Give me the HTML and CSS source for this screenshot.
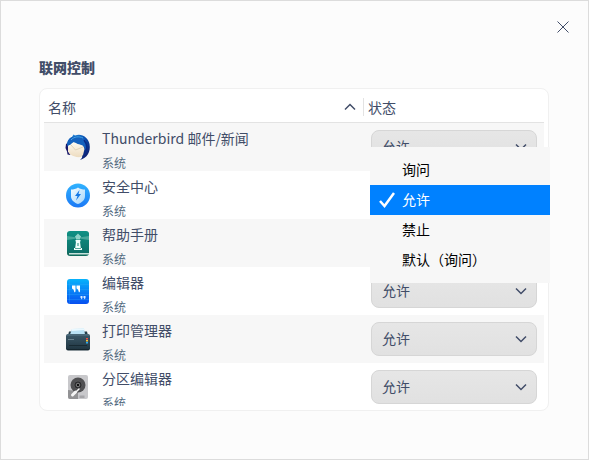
FILE: index.html
```html
<!DOCTYPE html>
<html lang="zh-CN">
<head>
<meta charset="utf-8">
<meta name="viewport" content="width=device-width, initial-scale=1">
<title>联网控制</title>
<link rel="stylesheet" href="styles.css">
</head>
<body>
<main class="window">
  <header class="titlebar">
    <button class="close" type="button" aria-label="关闭">
      <svg width="12" height="12" viewBox="0 0 12 12"><path d="M.5.5l11 11M11.5.5l-11 11"/></svg>
    </button>
  </header>
  <h1 class="title">联网控制</h1>
  <section class="panel">
    <div class="list">
      <table class="apps">
        <colgroup><col><col class="col-status"></colgroup>
        <thead>
          <tr>
            <th scope="col" aria-sort="ascending"><div class="head">名称
              <svg class="chevron" width="12" height="8" viewBox="0 0 12 8"><path d="M1 6.500l5-5 5 5"/></svg></div></th>
            <th scope="col"><div class="head head-status">状态</div></th>
          </tr>
        </thead>
        <tbody>
          <tr>
            <td><div class="app">
              <svg class="icon" viewBox="0 0 28 28">
                <defs>
                  <linearGradient id="tb" x1="0" y1="0" x2="1" y2="1"><stop offset="0" stop-color="#2b9be8"/><stop offset=".45" stop-color="#0b50b0"/><stop offset="1" stop-color="#10105a"/></linearGradient>
                  <linearGradient id="env" x1="0" y1="0" x2="0" y2="1"><stop offset="0" stop-color="#fffaf0"/><stop offset="1" stop-color="#eddcc0"/></linearGradient>
                </defs>
                <path fill="#18186a" d="M2 11l-.5 4 1.500 3.500.5 3L6 22l3-8-4-5z"/>
                <path fill="url(#tb)" d="M8 4l1.500-2.500 1.500 1c7-2.500 13 2 14.500 8.500 1.500 8-2.500 14-9.500 16 2-1.500 2.500-3 2-5L4 14C2.500 11 4 7 6 5.500z"/>
                <path fill="url(#env)" d="M4 13l5-4 5 1.500 5 1.500 1.500 4-1.500 6-2 2c-4 .5-8-.5-11.500-3L4 18.500z"/>
                <path fill="none" stroke="#dccbb0" stroke-width=".8" d="M7 12l4.500 5 7.500-3"/>
                <path fill="#1561bd" d="M3 12c0-4 2-7 5-8 5-2 11-1 13 2l2 7-2 4c0-3-2-5-5-5.500-3-.5-5-2-5-3-2 .5-4 2-5 3.500z"/>
                <path fill="none" stroke="#43a6e8" d="M7 7c3-3.500 8-4 12-2"/>
                <path fill="none" stroke="#0a2b86" stroke-width="1.500" d="M20 7c3 4 3.500 9 1 14"/>
              </svg>
              <div class="text"><span class="name">Thunderbird 邮件/新闻</span><span class="kind">系统</span></div></div></td>
            <td><div class="pick"><select aria-label="Thunderbird 邮件/新闻"><option>询问</option><option selected>允许</option><option>禁止</option><option>默认（询问）</option></select><svg class="chevron" width="12" height="8" viewBox="0 0 12 8"><path d="M1 1.500l5 5 5-5"/></svg></div></td>
          </tr>
          <tr>
            <td><div class="app">
              <svg class="icon" viewBox="0 0 28 28">
                <defs>
                  <linearGradient id="safe" x1="0" y1="0" x2="0" y2="1"><stop offset="0" stop-color="#30b3ff"/><stop offset="1" stop-color="#1b78f5"/></linearGradient>
                  <linearGradient id="shield" x1="0" y1="0" x2="1" y2="1"><stop offset="0" stop-color="#f4fbff"/><stop offset="1" stop-color="#a5d6fb"/></linearGradient>
                </defs>
                <circle cx="14" cy="14.500" r="12" fill="url(#safe)"/>
                <path fill="url(#shield)" d="M14 6.500c2 1.500 4.500 2 7 2V15c0 4-3 6.500-7 8-4-1.500-7-4-7-8V8.500c2.500 0 5-.5 7-2z"/>
                <path fill="#1478e6" d="M15.500 9L11 15h2.500l-1.500 4.500 5-6.500h-2.500z"/>
              </svg>
              <div class="text"><span class="name">安全中心</span><span class="kind">系统</span></div></div></td>
            <td><div class="pick"><select aria-label="安全中心"><option>询问</option><option selected>允许</option><option>禁止</option><option>默认（询问）</option></select><svg class="chevron" width="12" height="8" viewBox="0 0 12 8"><path d="M1 1.500l5 5 5-5"/></svg></div></td>
          </tr>
          <tr>
            <td><div class="app">
              <svg class="icon" viewBox="0 0 28 28">
                <defs><linearGradient id="help" x1="0" y1="0" x2="0" y2="1"><stop offset="0" stop-color="#0f9184"/><stop offset="1" stop-color="#0d6f68"/></linearGradient></defs>
                <rect x="3" y="3" width="22" height="24" rx="3" fill="#116b5c"/>
                <path fill="#c5e0da" d="M5 24h20v1.500H5z"/>
                <rect x="3" y="2" width="22" height="22" rx="3" fill="url(#help)"/>
                <path fill="#6bbcae" opacity=".6" d="M13 8.500L3 7v4l10-1.500zM15 8.500L25 7v4l-10-1.500z"/>
                <path fill="#8fd3c8" d="M14 4.500l3 3v1h-1v2h-4v-2h-1v-1z"/>
                <path fill="#f2fffb" d="M11.500 11h5v1.500h-.5l.8 6.500H18v2h-8v-2h1.200l.8-6.500h-.5z"/>
                <path fill="#258c7c" d="M13.500 14h1v3h-1zM11 19h6v.700h-6z"/>
              </svg>
              <div class="text"><span class="name">帮助手册</span><span class="kind">系统</span></div></div></td>
            <td><div class="pick"><select aria-label="帮助手册"><option>询问</option><option selected>允许</option><option>禁止</option><option>默认（询问）</option></select><svg class="chevron" width="12" height="8" viewBox="0 0 12 8"><path d="M1 1.500l5 5 5-5"/></svg></div></td>
          </tr>
          <tr>
            <td><div class="app">
              <svg class="icon" viewBox="0 0 28 28">
                <defs><linearGradient id="edit" x1="0" y1="0" x2="0" y2="1"><stop offset="0" stop-color="#08b3fb"/><stop offset="1" stop-color="#074ff0"/></linearGradient></defs>
                <rect x="3" y="2" width="22" height="25" rx="3" fill="url(#edit)"/>
                <path fill="none" stroke="#39adfa" stroke-width=".5" opacity=".6" d="M5.500 2v25M3 7.500h22M3 12.500h22M3 17.500h22M3 22.500h22"/>
                <path fill="#fff" d="M8 8.500h3.500v6l-1 1-1-3L8 11.500zM12.500 8.500H16v6l-1 1-1-3-1.500-1z"/>
                <path fill="#d7ecff" d="M16.500 19h2v2l-1 1.500-.5-1.500h-.5zM19.500 19h2v2l-1 1.500-.5-1.500h-.5z"/>
              </svg>
              <div class="text"><span class="name">编辑器</span><span class="kind">系统</span></div></div></td>
            <td><div class="pick"><select aria-label="编辑器"><option>询问</option><option selected>允许</option><option>禁止</option><option>默认（询问）</option></select><svg class="chevron" width="12" height="8" viewBox="0 0 12 8"><path d="M1 1.500l5 5 5-5"/></svg></div></td>
          </tr>
          <tr>
            <td><div class="app">
              <svg class="icon" viewBox="0 0 28 28">
                <defs><linearGradient id="prn" x1="0" y1="0" x2="0" y2="1"><stop offset="0" stop-color="#3c596a"/><stop offset="1" stop-color="#1e333e"/></linearGradient></defs>
                <path fill="#243d49" d="M5 6.500h18l1 4H4z"/>
                <path fill="#b9e2f5" d="M8 4l12-.5 1 6H6z"/>
                <path fill="#e9f8ff" d="M8 4l12-.5v1.500L8 6z"/>
                <rect x="2" y="9" width="24" height="16.500" rx="2" fill="url(#prn)"/>
                <path fill="#577786" d="M3 9.500h22v1H3z"/>
                <path fill="#78909b" d="M4 14h6v.800H4z"/>
                <path fill="#15252d" d="M5 20h18v.700H5zM3 24h22v1H3z"/>
                <path fill="#ee4f3e" d="M22 13h2v1.500h-2z"/><path fill="#f4c23c" d="M22 15h2v1.500h-2z"/><path fill="#27a9ee" d="M22 17h2v1.500h-2z"/>
              </svg>
              <div class="text"><span class="name">打印管理器</span><span class="kind">系统</span></div></div></td>
            <td><div class="pick"><select aria-label="打印管理器"><option>询问</option><option selected>允许</option><option>禁止</option><option>默认（询问）</option></select><svg class="chevron" width="12" height="8" viewBox="0 0 12 8"><path d="M1 1.500l5 5 5-5"/></svg></div></td>
          </tr>
          <tr>
            <td><div class="app">
              <svg class="icon" viewBox="0 0 28 28">
                <rect x="4" y="2" width="20" height="24" rx="2" fill="#c8c8cb"/>
                <path fill="#929294" d="M4 17l10 1v8H6q-2 0-2-2z"/>
                <circle cx="14" cy="12" r="7.500" fill="#505052"/>
                <circle cx="14" cy="12" r="4" fill="#29292b" stroke="#6a6a6c" stroke-width=".6"/>
                <circle cx="14" cy="12" r="1.800" fill="#111" stroke="#999" stroke-width=".8"/>
                <path fill="none" stroke="#f5f5f5" stroke-width="3" stroke-linecap="round" d="M8.500 22l3-3"/>
                <path fill="none" stroke="#f5f5f5" stroke-width="1.500" stroke-linecap="round" d="M11 20l4-4"/>
                <path fill="#a5a5a8" d="M15.500 22.500h5v2.500h-5z"/>
              </svg>
              <div class="text"><span class="name">分区编辑器</span><span class="kind">系统</span></div></div></td>
            <td><div class="pick"><select aria-label="分区编辑器"><option>询问</option><option selected>允许</option><option>禁止</option><option>默认（询问）</option></select><svg class="chevron" width="12" height="8" viewBox="0 0 12 8"><path d="M1 1.500l5 5 5-5"/></svg></div></td>
          </tr>
        </tbody>
      </table>
    </div>
    <div class="menu" role="menu">
      <button type="button" role="menuitemradio" aria-checked="false">询问</button>
      <button type="button" role="menuitemradio" aria-checked="true"><svg width="16" height="18" viewBox="0 0 16 18"><path d="M1 11l4.500 5L15 3"/></svg>允许</button>
      <button type="button" role="menuitemradio" aria-checked="false">禁止</button>
      <button type="button" role="menuitemradio" aria-checked="false">默认（询问）</button>
    </div>
  </section>
</main>
</body>
</html>
```
FILE: styles.css
```css
* {
  box-sizing: border-box;
}

body {
  margin: 0;
  font: 14px/20px "Noto Sans CJK SC", sans-serif;
  color: #414d68;
}

button,
select {
  margin: 0;
  border: 0;
  font: inherit;
  color: inherit;
}

.window {
  display: flex;
  flex-direction: column;
  height: 100vh;
  padding: 0 39px 48px 38px;
  border: 1px solid #dcdcdc;
  background: #fcfcfc;
}

.titlebar {
  display: flex;
  flex: none;
  justify-content: flex-end;
  height: 52px;
  margin-right: -39px;
}

.close {
  display: grid;
  place-items: center;
  width: 50px;
  padding: 0;
  background: none;
}

.close svg {
  fill: none;
  stroke: #414d68;
}

.title {
  margin: 4px 0 11px;
  font-size: 14px;
  line-height: 20px;
  font-weight: 900;
}

.panel {
  position: relative;
  display: flex;
  flex: 1;
  min-height: 0;
  padding: 4px;
  border: 1px solid #f0f0f0;
  border-radius: 8px;
  background: #fff;
}

.list {
  flex: 1;
  overflow: hidden;
}

.apps {
  width: 100%;
  table-layout: fixed;
  border-collapse: collapse;
}

.col-status {
  width: 181px;
}

.apps th,
.apps td {
  padding: 0;
}

.apps th {
  border-bottom: 1px solid #e3e3e3;
  font-weight: 400;
  text-align: left;
}

.head {
  display: flex;
  align-items: center;
  justify-content: space-between;
  height: 29px;
  padding: 0 7px 2px 4px;
}

.head-status::before {
  content: "";
  width: 1px;
  height: 18px;
  margin-right: 4px;
  background: #e3e3e3;
}

.head-status {
  justify-content: flex-start;
  padding-left: 0;
}

.chevron {
  fill: none;
  stroke: #414d68;
  stroke-width: 1.5;
}

.apps tbody tr:nth-child(odd) {
  background: #f7f7f7;
}

.app {
  display: flex;
  align-items: center;
  gap: 10px;
  height: 48px;
  padding-left: 20px;
}

.icon {
  flex: none;
  width: 28px;
  height: 28px;
}

.name,
.kind {
  display: block;
}

.name {
  margin-bottom: 2px;
  line-height: 30px;
}

.kind {
  font-size: 12px;
  line-height: 16px;
  color: #526a7f;
}

.pick {
  display: grid;
  align-items: center;
  padding: 0 7px 0 8px;
}

.pick > * {
  grid-area: 1 / 1;
}

.pick .chevron {
  justify-self: end;
  margin-right: 10px;
  pointer-events: none;
}

.pick select {
  appearance: none;
  width: 100%;
  height: 34px;
  padding: 0 10px 2px;
  border: 1px solid #d6d6d6;
  border-radius: 8px;
  background: linear-gradient(#e6e6e6, #e1e1e1);
}

.menu {
  position: absolute;
  top: 58px;
  right: -2px;
  width: 180px;
  padding: 8px 0;
  background: #f7f7f7;
  color: #000;
}

.menu button {
  display: flex;
  align-items: center;
  width: 100%;
  height: 30px;
  padding: 0 0 2px 32px;
  background: none;
}

.menu button[aria-checked="true"] {
  padding-left: 9px;
  gap: 7px;
  background: #0081ff;
  color: #fff;
}

.menu svg {
  fill: none;
  stroke: #fff;
  stroke-width: 2.5;
}
```
